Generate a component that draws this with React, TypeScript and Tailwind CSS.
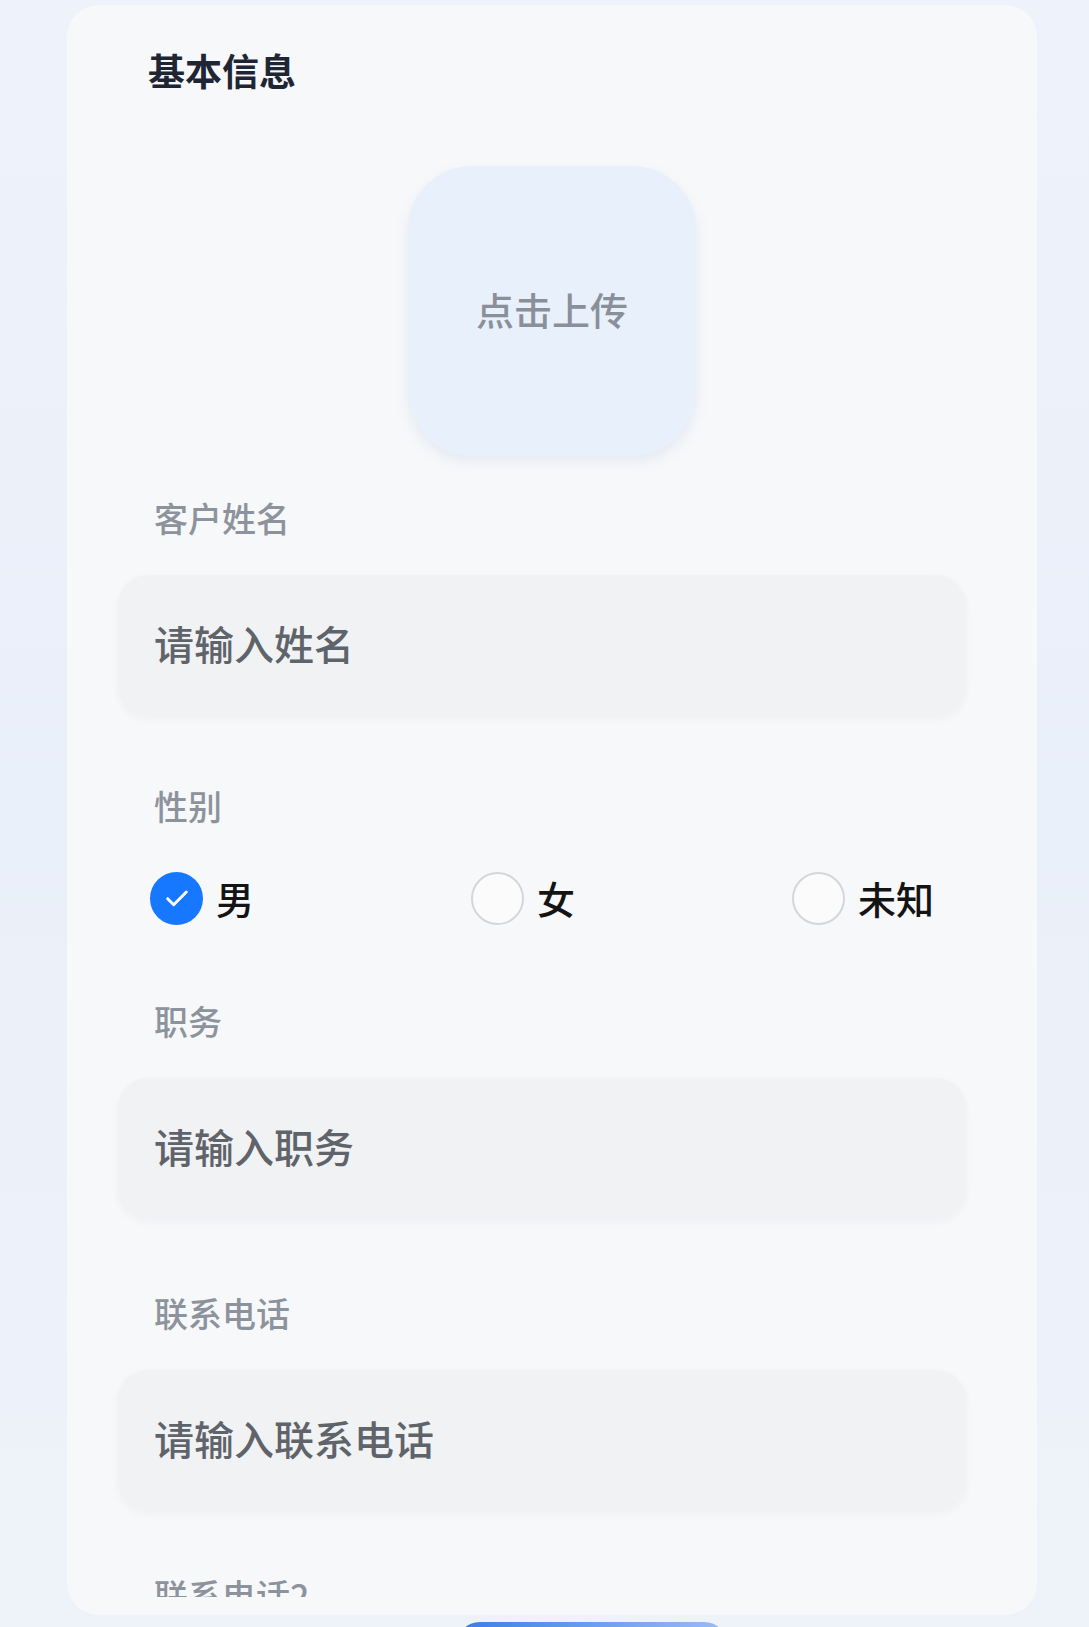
import React from "react";

function Label({ text, className = "" }: { text: string; className?: string }) {
  return (
    <div className={`pl-[36px] text-[34px] leading-[34px] font-medium text-[#8d939c] ${className}`}>{text}</div>
  );
}

function Field({ placeholder, className = "" }: { placeholder: string; className?: string }) {
  return (
    <div
      className={`h-[141px] rounded-[30px] bg-[#f1f2f4] shadow-[0_3px_8px_rgba(40,50,70,0.04)] flex items-center ${className}`}
    >
      <input
        type="text"
        placeholder={placeholder}
        className="w-full bg-transparent pl-[36px] pr-[34px] pb-[6px] text-[40px] leading-[40px] font-medium text-[#2b2f36] placeholder:text-[#5f636a] outline-none font-['Noto_Sans_CJK_SC','Noto_Sans',sans-serif]"
      />
    </div>
  );
}

function Radio({ label, checked }: { label: string; checked?: boolean }) {
  return (
    <div className="flex items-center gap-[13px]">
      {checked ? (
        <div className="w-[53px] h-[53px] rounded-full bg-[#1677ff] flex items-center justify-center">
          <svg width="32" height="32" viewBox="0 0 24 24" fill="none">
            <path d="M5 12.5l4.5 4.5L19 7.5" stroke="#ffffff" strokeWidth="2.2" strokeLinecap="round" strokeLinejoin="round" />
          </svg>
        </div>
      ) : (
        <div className="w-[53px] h-[53px] rounded-full border-[2px] border-[#d3d6db] bg-[#fbfbfc]" />
      )}
      <span className="text-[38px] leading-[38px] font-medium text-[#141414]">{label}</span>
    </div>
  );
}

export default function App() {
  return (
    <div className="relative h-[1627px] w-full overflow-hidden bg-gradient-to-b from-[#edf2fb] via-[#eaf0f9] to-[#eef3fa] font-['Noto_Sans_CJK_SC','Noto_Sans',sans-serif]">
      <div className="ml-[67px] mt-[5px] w-[970px] h-[1610px] rounded-[32px] bg-[#f7f8fa] overflow-hidden">
        <div className="h-[1592px] overflow-hidden pt-[47px]">
          <div className="pl-[81px] text-[37px] leading-[36px] font-bold text-[#1f2633]">基本信息</div>

          <div className="mx-auto mt-[78px] w-[288px] h-[290px] rounded-[64px] bg-[#e8f0fb] shadow-[0_6px_14px_rgba(150,170,200,0.18)] flex items-center justify-center">
            <span className="text-[38px] leading-[38px] font-medium text-[#8a9099] -mt-[4px]">点击上传</span>
          </div>

          <div className="pl-[51px] pr-[71px]">
            <Label text="客户姓名" className="mt-[45px]" />
            <Field placeholder="请输入姓名" className="mt-[40px]" />

            <Label text="性别" className="mt-[73px]" />
            <div className="mt-[49px] h-[52px] px-[32px] flex items-center justify-between">
              <Radio label="男" checked />
              <Radio label="女" />
              <Radio label="未知" />
            </div>

            <Label text="职务" className="mt-[80px]" />
            <Field placeholder="请输入职务" className="mt-[40px]" />

            <Label text="联系电话" className="mt-[77px]" />
            <Field placeholder="请输入联系电话" className="mt-[40px]" />

            <Label text="联系电话2" className="mt-[67px]" />
          </div>
        </div>
      </div>
      <div className="ml-[456px] mt-[7px] w-[272px] h-[30px] rounded-t-[24px] bg-gradient-to-r from-[#3b7be8] to-[#9bbcf2]" />
    </div>
  );
}
